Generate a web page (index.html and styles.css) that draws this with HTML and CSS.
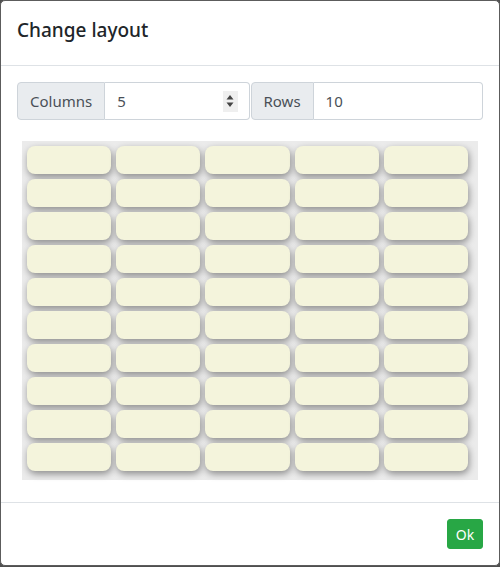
FILE: index.html
```html
<!DOCTYPE html>
<html>
<head>
<meta charset="utf-8">
<link rel="stylesheet" href="styles.css">
</head>
<body>
<div class="modal">
  <div class="modal-header">
    <h5 class="modal-title">Change layout</h5>
  </div>
  <div class="modal-body">
    <div class="inputs">
      <div class="input-group">
        <span class="addon">Columns</span>
        <div class="field">
          <span class="value">5</span>
          <span class="spin">
            <svg width="8" height="14" viewBox="0 0 8 14"><path d="M4 1 L7.5 5.5 H0.5 Z M4 13 L7.5 8.5 H0.5 Z" fill="#444"/></svg>
          </span>
        </div>
      </div>
      <div class="input-group">
        <span class="addon">Rows</span>
        <div class="field"><span class="value">10</span></div>
      </div>
    </div>
    <div class="grid">
      <div class="cell"></div><div class="cell"></div><div class="cell"></div><div class="cell"></div><div class="cell"></div>
      <div class="cell"></div><div class="cell"></div><div class="cell"></div><div class="cell"></div><div class="cell"></div>
      <div class="cell"></div><div class="cell"></div><div class="cell"></div><div class="cell"></div><div class="cell"></div>
      <div class="cell"></div><div class="cell"></div><div class="cell"></div><div class="cell"></div><div class="cell"></div>
      <div class="cell"></div><div class="cell"></div><div class="cell"></div><div class="cell"></div><div class="cell"></div>
      <div class="cell"></div><div class="cell"></div><div class="cell"></div><div class="cell"></div><div class="cell"></div>
      <div class="cell"></div><div class="cell"></div><div class="cell"></div><div class="cell"></div><div class="cell"></div>
      <div class="cell"></div><div class="cell"></div><div class="cell"></div><div class="cell"></div><div class="cell"></div>
      <div class="cell"></div><div class="cell"></div><div class="cell"></div><div class="cell"></div><div class="cell"></div>
      <div class="cell"></div><div class="cell"></div><div class="cell"></div><div class="cell"></div><div class="cell"></div>
    </div>
  </div>
  <div class="modal-footer">
    <button class="btn-ok">Ok</button>
  </div>
</div>
</body>
</html>
```

FILE: styles.css
```css
html, body {
  margin: 0;
  padding: 0;
  background: #4f4f4f;
  height: 567px;
  overflow: hidden;
}
body {
  font-family: "Noto Sans", "Open Sans", sans-serif;
  color: #212529;
}
.modal {
  width: 498px;
  height: 564px;
  background: #fff;
  border: 1px solid #5c5c5c;
  border-radius: 5px;
  display: flex;
  flex-direction: column;
}
.modal-header {
  padding: 13px 16px 19px 16px;
  height: 32px;
  border-bottom: 1px solid #dee2e6;
  display: flex;
  align-items: center;
}
.modal-title {
  margin: 0;
  font-size: 19px;
  font-weight: 500;
  line-height: 30px;
  color: #212529;
}
.modal-body {
  padding: 16px 16px 16px 16px;
  flex: 1;
}
.inputs {
  display: flex;
  gap: 1px;
}
.input-group {
  flex: 1;
  display: flex;
  height: 38px;
  font-size: 15px;
  color: #495057;
}
.addon {
  display: flex;
  align-items: center;
  padding: 0 12px;
  background: #e9ecef;
  border: 1px solid #ced4da;
  border-radius: 4px 0 0 4px;
}
.field {
  flex: 1;
  display: flex;
  align-items: center;
  justify-content: space-between;
  padding: 0 12px;
  border: 1px solid #ced4da;
  border-left: none;
  border-radius: 0 4px 4px 0;
  background: #fff;
}
.spin {
  width: 15px;
  height: 21px;
  background: #efefef;
  display: flex;
  align-items: center;
  justify-content: center;
  margin-right: -1px;
}
.grid {
  margin: 21px 5px 5px 5px;
  height: 325px;
  background: #ebebeb;
  padding: 5px 10px 9px 5px;
  display: grid;
  grid-template-columns: repeat(5, 1fr);
  grid-template-rows: repeat(10, 28px);
  column-gap: 5px;
  row-gap: 5px;
  box-sizing: content-box;
}
.cell {
  background: #f4f4dc;
  border-radius: 8px;
  box-shadow: 1px 3px 7px rgba(0, 0, 0, 0.4);
}
.modal-footer {
  border-top: 1px solid #dee2e6;
  padding: 16px;
  display: flex;
  justify-content: flex-end;
}
.btn-ok {
  font-family: inherit;
  background: #28a745;
  color: #fff;
  border: 1px solid #28a745;
  border-radius: 3px;
  font-size: 14px;
  height: 30px;
  width: 36px;
  padding: 0;
}
```
